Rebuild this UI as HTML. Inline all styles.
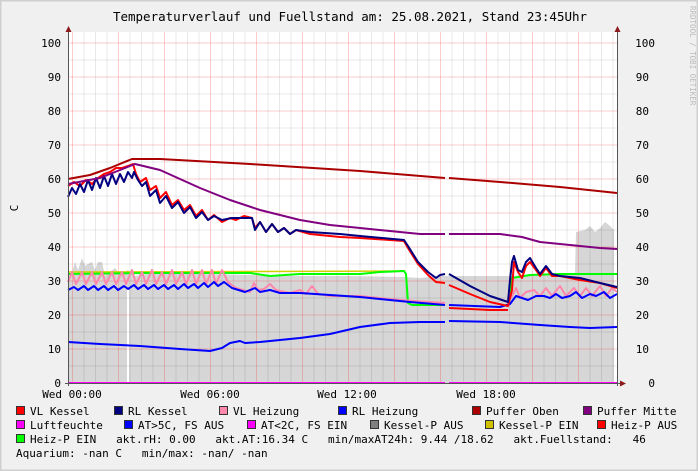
<!DOCTYPE html>
<html><head><meta charset="utf-8"><style>
html,body{margin:0;padding:0;background:#f0f0f0}
svg{display:block}
text{font-family:"DejaVu Sans Mono","Liberation Mono",monospace;fill:#000}
</style></head><body>
<svg width="698" height="471" viewBox="0 0 698 471" xmlns="http://www.w3.org/2000/svg">
<rect x="0" y="0" width="698" height="471" fill="#f0f0f0"/>
<rect x="0.5" y="0.5" width="697" height="470" fill="none" stroke="#cfcfcf" stroke-width="2"/>
<text x="350" y="21" font-size="12.5" text-anchor="middle">Temperaturverlauf und Fuellstand am: 25.08.2021, Stand 23:45Uhr</text>
<text x="690" y="6" font-size="7.5" fill="#bbb" style="fill:#bbb" transform="rotate(90 690 6)">RRDTOOL / TOBI OETIKER</text>
<text x="18" y="208" font-size="11" transform="rotate(-90 18 208)" text-anchor="middle">C</text>
<rect x="68" y="32" width="549" height="351" fill="#fff"/>
<polygon fill="#d6d6d6" points="68,383 68,278 72,272 75,262 78,270 82,258 85,266 88,264 92,262 95,270 98,262 102,262 105,276 110,272 115,268 120,274 128,270 135,276 160,272 200,274 300,276 350,276 403,277 420,278 440,276 447,276 510,276 540,274 575,274 576,232 585,230 590,226 595,232 600,228 605,222 610,226 614,230 614,383"/>
<line x1="128" y1="288" x2="128" y2="383" stroke="#fff" stroke-width="2"/>
<g stroke-width="1">
<g stroke="#000" stroke-opacity="0.09">
<line x1="68" x2="617" y1="60" y2="60"/><line x1="68" x2="617" y1="94" y2="94"/><line x1="68" x2="617" y1="128" y2="128"/><line x1="68" x2="617" y1="162" y2="162"/><line x1="68" x2="617" y1="196" y2="196"/><line x1="68" x2="617" y1="230" y2="230"/><line x1="68" x2="617" y1="264" y2="264"/><line x1="68" x2="617" y1="298" y2="298"/><line x1="68" x2="617" y1="332" y2="332"/><line x1="68" x2="617" y1="366" y2="366"/>
<line y1="32" y2="383" x1="84" x2="84"/><line y1="32" y2="383" x1="95.5" x2="95.5"/><line y1="32" y2="383" x1="107" x2="107"/><line y1="32" y2="383" x1="130" x2="130"/><line y1="32" y2="383" x1="141.5" x2="141.5"/><line y1="32" y2="383" x1="153" x2="153"/><line y1="32" y2="383" x1="176" x2="176"/><line y1="32" y2="383" x1="187.5" x2="187.5"/><line y1="32" y2="383" x1="199" x2="199"/><line y1="32" y2="383" x1="222" x2="222"/><line y1="32" y2="383" x1="233.5" x2="233.5"/><line y1="32" y2="383" x1="245" x2="245"/><line y1="32" y2="383" x1="268" x2="268"/><line y1="32" y2="383" x1="279.5" x2="279.5"/><line y1="32" y2="383" x1="291" x2="291"/><line y1="32" y2="383" x1="314" x2="314"/><line y1="32" y2="383" x1="325.5" x2="325.5"/><line y1="32" y2="383" x1="337" x2="337"/><line y1="32" y2="383" x1="360" x2="360"/><line y1="32" y2="383" x1="371.5" x2="371.5"/><line y1="32" y2="383" x1="383" x2="383"/><line y1="32" y2="383" x1="406" x2="406"/><line y1="32" y2="383" x1="417.5" x2="417.5"/><line y1="32" y2="383" x1="429" x2="429"/><line y1="32" y2="383" x1="452" x2="452"/><line y1="32" y2="383" x1="463.5" x2="463.5"/><line y1="32" y2="383" x1="475" x2="475"/><line y1="32" y2="383" x1="498" x2="498"/><line y1="32" y2="383" x1="509.5" x2="509.5"/><line y1="32" y2="383" x1="521" x2="521"/><line y1="32" y2="383" x1="544" x2="544"/><line y1="32" y2="383" x1="555.5" x2="555.5"/><line y1="32" y2="383" x1="567" x2="567"/><line y1="32" y2="383" x1="590" x2="590"/><line y1="32" y2="383" x1="601.5" x2="601.5"/><line y1="32" y2="383" x1="613" x2="613"/>
</g>
<g stroke="#f00" stroke-opacity="0.2">
<line x1="68" x2="617" y1="43" y2="43"/><line x1="68" x2="617" y1="77" y2="77"/><line x1="68" x2="617" y1="111" y2="111"/><line x1="68" x2="617" y1="145" y2="145"/><line x1="68" x2="617" y1="179" y2="179"/><line x1="68" x2="617" y1="213" y2="213"/><line x1="68" x2="617" y1="247" y2="247"/><line x1="68" x2="617" y1="281" y2="281"/><line x1="68" x2="617" y1="315" y2="315"/><line x1="68" x2="617" y1="349" y2="349"/>
<line y1="32" y2="383" x1="72.5" x2="72.5"/><line y1="32" y2="383" x1="118.5" x2="118.5"/><line y1="32" y2="383" x1="164.5" x2="164.5"/><line y1="32" y2="383" x1="210.5" x2="210.5"/><line y1="32" y2="383" x1="256.5" x2="256.5"/><line y1="32" y2="383" x1="302.5" x2="302.5"/><line y1="32" y2="383" x1="348.5" x2="348.5"/><line y1="32" y2="383" x1="394.5" x2="394.5"/><line y1="32" y2="383" x1="440.5" x2="440.5"/><line y1="32" y2="383" x1="486.5" x2="486.5"/><line y1="32" y2="383" x1="532.5" x2="532.5"/><line y1="32" y2="383" x1="578.5" x2="578.5"/>
</g>
</g>
<g fill="none" stroke-width="2" stroke-linejoin="round">
<polyline stroke="#0000ff" points="68,342 100,344 140,346 180,349 210,351 222,348 230,343 240,341 245,343 260,342 300,338 330,334 360,327 390,323 420,322 445,322"/>
<polyline stroke="#0000ff" points="449,321 500,322 540,325 570,327 590,328 617,327"/>
<polyline stroke="#d0d000" stroke-width="1.5" points="68,272 405,271"/>
<polyline stroke="#00ff00" points="68,274 150,273 250,273 270,276 300,274 360,274 380,272 404,271 406,274 408,303 412,305 445,305"/>
<polyline stroke="#00ff00" points="510,293 512,278 530,275 560,274 617,274"/>
<polyline stroke="#ff88aa" points="68,282 72,272 76,284 82,272 86,284 92,272 96,284 102,272 106,284 112,272 116,284 122,272 126,284 132,270 136,284 142,272 146,284 152,270 156,284 162,272 166,284 172,270 176,284 182,272 186,284 192,270 196,284 202,270 206,284 212,270 216,284 222,270 228,282 236,288 250,292 254,283 258,290 264,289 270,284 276,290 290,293 300,290 306,294 312,286 318,294 330,296 360,296 400,300 445,303"/>
<polyline stroke="#ff88aa" points="508,302 512,296 516,288 520,298 526,292 534,290 540,296 546,288 552,296 560,286 566,296 574,288 580,296 586,288 592,296 600,286 606,296 612,288 617,292"/>
<polyline stroke="#0000ff" points="68,290 74,287 78,290 84,286 88,290 94,286 98,290 104,286 108,290 114,286 118,290 124,286 128,289 134,285 138,289 144,285 148,289 154,285 158,289 164,285 168,289 174,285 178,289 184,284 188,288 194,284 198,288 204,283 208,287 214,282 218,286 224,282 232,288 245,292 255,288 260,292 270,290 280,293 300,293 330,295 360,297 410,302 445,305"/>
<polyline stroke="#0000ff" points="449,305 500,307 510,304 516,296 522,298 528,300 536,296 544,296 550,298 556,294 562,298 570,296 576,292 582,298 590,294 596,296 604,292 610,298 617,294"/>
<polyline stroke="#ff0000" points="68,186 74,182 80,186 86,180 92,184 98,178 104,174 110,172 116,168 122,168 128,166 133,164 136,174 140,182 146,178 150,190 156,186 160,198 166,192 172,205 178,200 184,210 190,205 196,216 202,210 208,220 214,215 222,222 230,218 236,220 244,216 252,218 255,228 260,222 266,232 272,224 278,232 284,228 290,234 296,230 310,234 340,237 360,238 404,241 408,248 418,264 428,275 436,282 445,283"/>
<polyline stroke="#ff0000" points="449,285 470,294 490,302 508,306 512,290 514,262 518,272 522,278 526,266 530,262 536,270 540,276 546,268 552,276 560,276 580,280 600,283 617,288"/>
<polyline stroke="#ff0000" points="449,308 470,309 490,310 508,310"/>
<polyline stroke="#000080" points="68,197 72,188 76,194 80,184 84,192 88,180 92,190 96,178 100,188 104,176 108,186 112,174 116,184 120,174 124,182 128,172 132,178 134,172 138,180 142,186 146,182 150,196 156,190 160,203 166,196 172,208 178,202 184,213 190,207 196,218 202,212 208,220 214,216 222,220 232,218 248,218 252,218 255,230 260,222 266,232 272,224 278,232 284,228 290,234 296,230 310,232 340,234 360,236 404,240 408,246 418,262 428,272 436,278 440,275 445,274"/>
<polyline stroke="#000080" points="449,274 470,286 490,296 508,302 510,280 512,262 514,256 518,270 522,272 526,262 530,258 536,268 540,274 546,266 552,274 560,276 580,278 600,283 617,287"/>
<polyline stroke="#800080" points="68,184 100,178 120,170 135,164 160,170 200,188 230,200 260,210 300,220 330,225 360,228 400,232 420,234 445,234"/>
<polyline stroke="#800080" points="449,234 500,234 522,237 540,242 560,244 580,246 600,248 617,249"/>
<polyline stroke="#aa0000" points="68,179 90,175 110,168 132,159 160,159 250,164 360,171 445,178"/>
<polyline stroke="#aa0000" points="449,178 500,182 560,187 617,193"/>
<line x1="68" y1="383" x2="445" y2="383" stroke="#ff00ff"/>
<line x1="449" y1="383" x2="617" y2="383" stroke="#ff00ff"/>
</g>
<g stroke="#555" stroke-width="1">
<line x1="68.5" y1="30" x2="68.5" y2="386"/>
<line x1="617.5" y1="30" x2="617.5" y2="386"/>
<line x1="65" y1="383.5" x2="620" y2="383.5"/>
</g>
<g fill="#8b1a1a">
<polygon points="65.5,32 71.5,32 68.5,26"/>
<polygon points="614.5,32 620.5,32 617.5,26"/>
<polygon points="620,380.5 620,386.5 626,383.5"/>
</g>
<g font-size="11" text-anchor="end">
<text x="61" y="47">100</text><text x="61" y="81">90</text><text x="61" y="115">80</text><text x="61" y="149">70</text><text x="61" y="183">60</text><text x="61" y="217">50</text><text x="61" y="251">40</text><text x="61" y="285">30</text><text x="61" y="319">20</text><text x="61" y="353">10</text><text x="61" y="387">0</text>
</g>
<g font-size="11" text-anchor="end">
<text x="655" y="47">100</text><text x="649" y="81">90</text><text x="649" y="115">80</text><text x="649" y="149">70</text><text x="649" y="183">60</text><text x="649" y="217">50</text><text x="649" y="251">40</text><text x="649" y="285">30</text><text x="649" y="319">20</text><text x="649" y="353">10</text><text x="655" y="387">0</text>
</g>
<g font-size="11" text-anchor="middle">
<text x="72" y="398">Wed 00:00</text><text x="210" y="398">Wed 06:00</text><text x="347" y="398">Wed 12:00</text><text x="486" y="398">Wed 18:00</text>
</g>
<g stroke="#333" stroke-width="1">
<rect x="16.5" y="406.5" width="8" height="8" fill="#ff0000"/>
<rect x="114.5" y="406.5" width="8" height="8" fill="#000080"/>
<rect x="219.5" y="406.5" width="8" height="8" fill="#ff88aa"/>
<rect x="338.5" y="406.5" width="8" height="8" fill="#0000ff"/>
<rect x="472.5" y="406.5" width="8" height="8" fill="#aa0000"/>
<rect x="583.5" y="406.5" width="8" height="8" fill="#800080"/>
<rect x="16.5" y="420.5" width="8" height="8" fill="#ff00ff"/>
<rect x="124.5" y="420.5" width="8" height="8" fill="#0000ff"/>
<rect x="247.5" y="420.5" width="8" height="8" fill="#ff00ff"/>
<rect x="370.5" y="420.5" width="8" height="8" fill="#808080"/>
<rect x="485.5" y="420.5" width="8" height="8" fill="#d0c000"/>
<rect x="597.5" y="420.5" width="8" height="8" fill="#ff0000"/>
<rect x="16.5" y="434.5" width="8" height="8" fill="#00ff00"/>
</g>
<g font-size="11">
<text x="30" y="415">VL Kessel</text>
<text x="128" y="415">RL Kessel</text>
<text x="233" y="415">VL Heizung</text>
<text x="352" y="415">RL Heizung</text>
<text x="486" y="415">Puffer Oben</text>
<text x="597" y="415">Puffer Mitte</text>
<text x="30" y="429">Luftfeuchte</text>
<text x="138" y="429">AT&gt;5C, FS AUS</text>
<text x="261" y="429">AT&lt;2C, FS EIN</text>
<text x="384" y="429">Kessel-P AUS</text>
<text x="499" y="429">Kessel-P EIN</text>
<text x="611" y="429">Heiz-P AUS</text>
<text x="30" y="443" xml:space="preserve">Heiz-P EIN   akt.rH: 0.00   akt.AT:16.34 C   min/maxAT24h: 9.44 /18.62   akt.Fuellstand:   46</text>
<text x="16" y="457" xml:space="preserve">Aquarium: -nan C   min/max: -nan/ -nan</text>
</g>
</svg>
</body></html>
